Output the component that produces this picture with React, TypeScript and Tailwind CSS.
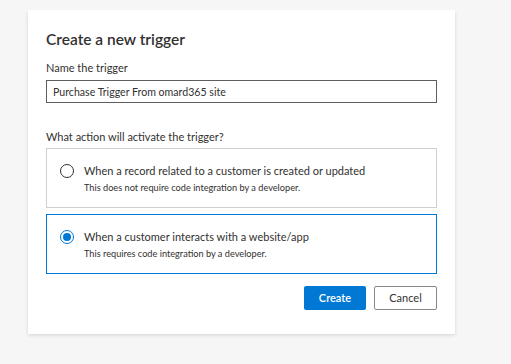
import { useState } from 'react';

const options = [
  {
    id: 'record',
    title: 'When a record related to a customer is created or updated',
    description: 'This does not require code integration by a developer.',
  },
  {
    id: 'interaction',
    title: 'When a customer interacts with a website/app',
    description: 'This requires code integration by a developer.',
  },
];

export default function App() {
  const [name, setName] = useState('Purchase Trigger From omard365 site');
  const [selected, setSelected] = useState('interaction');

  return (
    <div className="min-h-screen bg-[#f6f6f6] pl-[28px] pt-[10px] font-['Lato',sans-serif] text-[#323130]">
      <div className="w-[427px] bg-white px-[18px] pb-[24px] pt-[18px] shadow-[0_1.6px_3.6px_rgba(0,0,0,0.13),0_0.3px_0.9px_rgba(0,0,0,0.11)]">
        <h2 className="text-[15.5px] font-semibold leading-[22px]">Create a new trigger</h2>

        <label className="mt-[10px] block">
          <span className="block text-[11px] leading-[16px]">Name the trigger</span>
          <input
            value={name}
            onChange={(event) => setName(event.target.value)}
            className="mt-[4px] h-[23px] w-full border border-[#605e5c] px-[6px] text-[10.6px] outline-none"
          />
        </label>

        <p className="mt-[26px] text-[11px] leading-[16px]">What action will activate the trigger?</p>

        <div className="mt-[3px] space-y-[6px]">
          {options.map((option) => {
            const active = selected === option.id;
            return (
              <button
                key={option.id}
                type="button"
                onClick={() => setSelected(option.id)}
                className={`flex h-[60px] w-full items-center gap-[10px] border bg-white px-[13px] text-left ${
                  active ? 'border-[#0078d4]' : 'border-[#d2d0ce]'
                }`}
              >
                <span
                  className={`mb-[15px] flex h-[14px] w-[14px] shrink-0 items-center justify-center rounded-full border ${
                    active ? 'border-[#0078d4]' : 'border-[#323130]'
                  }`}
                >
                  {active && <span className="h-[8px] w-[8px] rounded-full bg-[#0078d4]" />}
                </span>
                <span className="block">
                  <span className="block text-[11px] leading-[17px]">{option.title}</span>
                  <span className="mt-[2px] block text-[9.2px] leading-[13px]">{option.description}</span>
                </span>
              </button>
            );
          })}
        </div>

        <div className="mt-[12px] flex justify-end gap-[8px]">
          <button type="button" className="h-[24px] w-[62px] rounded-[2px] bg-[#0078d4] text-[11px] font-semibold text-white">
            Create
          </button>
          <button type="button" className="h-[24px] w-[63px] rounded-[2px] border border-[#8a8886] bg-white text-[11px] text-[#323130]">
            Cancel
          </button>
        </div>
      </div>
    </div>
  );
}
